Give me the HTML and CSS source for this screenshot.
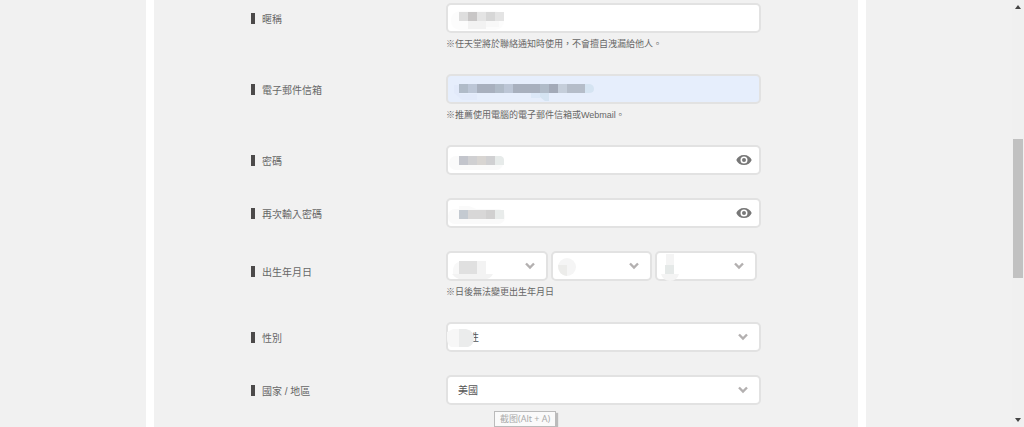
FILE: index.html
```html
<!DOCTYPE html>
<html lang="zh-Hant">
<head>
<meta charset="utf-8">
<meta name="viewport" content="width=device-width, initial-scale=1">
<title>帳號註冊</title>
<link rel="stylesheet" href="styles.css">
</head>
<body>
<svg class="defs" aria-hidden="true">
  <symbol id="chevron" viewBox="0 0 12 8"><path d="M2 1.5 6 5.500 10 1.500" fill="none" stroke="#b3b0b0" stroke-width="2.4"/></symbol>
  <symbol id="eye" viewBox="0 0 16 10"><path fill="#777" fill-rule="evenodd" d="M8 0C4.400 0 1.400 2 .3 5c1.100 3 4.100 5 7.700 5s6.600-2 7.700-5C14.600 2 11.600 0 8 0zm0 8.500a3.500 3.500 0 1 1 0-7 3.500 3.500 0 0 1 0 7zM8 3a2 2 0 1 0 0 4 2 2 0 0 0 0-4z"/></symbol>
</svg>
<main class="page">
  <form class="card">
    <div class="row">
      <label class="label" for="nickname">暱稱</label>
      <div class="field">
        <div class="control">
          <input class="box" id="nickname" type="text">
          <svg class="mask" viewBox="0 0 160 30" aria-hidden="true">
            <rect x="5" y="8" width="53" height="19" rx="9" fill="#fcfcfc"/>
            <path fill="#dedede" d="M13 9h9v9h-9z"/><path fill="#c8c6c6" d="M22 9h9v9h-9z"/><path fill="#e4e4e4" d="M31 9h9v9h-9zM49 9h9v9h-9z"/><path fill="#d7d7d7" d="M40 9h9v9h-9z"/><path fill="#f2f2f2" d="M22 18h18v8H22z"/><path fill="#f8f8f8" d="M40 18h13v6H40z"/>
          </svg>
        </div>
        <p class="note">※任天堂將於聯絡通知時使用，不會擅自洩漏給他人。</p>
      </div>
    </div>
    <div class="row">
      <label class="label" for="email">電子郵件信箱</label>
      <div class="field">
        <div class="control">
          <input class="box filled" id="email" type="email">
          <svg class="mask" viewBox="0 0 160 30" aria-hidden="true">
            <path fill="#e2eafa" d="M8 11h5v9h18v6H16l-8-7z"/>
            <path fill="#b0bbc8" d="M13 10h9v9h-9zM49 10h9v9h-9zM94 10h9v9h-9z"/><path fill="#bcc6d6" d="M22 10h9v9h-9zM58 10h9v9h-9z"/><path fill="#a8b0be" d="M31 10h18v9H31zM67 10h27v9H67z"/><path fill="#a3aab8" d="M103 10h9v9h-9z"/><path fill="#c5ceda" d="M112 10h9v9h-9z"/><path fill="#b5bdc9" d="M121 10h18v9h-18z"/><path fill="#d5e4f2" d="M139 10h5q4 1 4 5t-5 4h-4zM94 19h9v8h-4l-5-4z"/><path fill="#dce8f8" d="M85 19h9v5h-9z"/>
          </svg>
        </div>
        <p class="note">※推薦使用電腦的電子郵件信箱或Webmail。</p>
      </div>
    </div>
    <div class="row">
      <label class="label" for="password">密碼</label>
      <div class="field">
        <div class="control">
          <input class="box" id="password" type="password">
          <button class="reveal" type="button" aria-label="顯示密碼"><svg class="eye"><use href="#eye"/></svg></button>
          <svg class="mask" viewBox="0 0 160 30" aria-hidden="true">
            <rect x="3" y="11" width="54" height="14" rx="7" fill="#fafafa"/>
            <path fill="#c3c5cc" d="M13 11h9v9h-9z"/><path fill="#d0d0d2" d="M22 11h9v9h-9zM40 11h9v9h-9z"/><path fill="#d8d5d2" d="M31 11h9v9h-9z"/><path fill="#e7ebea" d="M49 11h6q3 1 3 4v5h-9z"/>
          </svg>
        </div>
      </div>
    </div>
    <div class="row">
      <label class="label" for="confirm">再次輸入密碼</label>
      <div class="field">
        <div class="control">
          <input class="box" id="confirm" type="password">
          <button class="reveal" type="button" aria-label="顯示密碼"><svg class="eye"><use href="#eye"/></svg></button>
          <svg class="mask" viewBox="0 0 160 30" aria-hidden="true">
            <rect x="2" y="11" width="57" height="15" rx="7" fill="#fafafa"/><path fill="#fafafa" d="M13 8h10l10 4H13z"/>
            <path fill="#c4cad1" d="M13 12h9v9h-9z"/><path fill="#d8d7d7" d="M22 12h18v9H22z"/><path fill="#d1d0d0" d="M40 12h9v9h-9z"/><path fill="#e9eceb" d="M49 12h9v9h-9z"/>
          </svg>
        </div>
      </div>
    </div>
    <div class="row">
      <label class="label label-group" for="year">出生年月日</label>
      <div class="field">
        <div class="date">
          <div class="control">
            <select class="box" id="year" aria-label="年"><option></option></select>
            <svg class="chevron"><use href="#chevron"/></svg>
            <svg class="mask" viewBox="0 0 160 30" aria-hidden="true">
              <path fill="#f8f8f8" d="M7 18q1-6 6-7v12H7z"/><path fill="#f3f3f3" d="M31 10h9v13h-9zM6 23h41q-2 4-6 5H13q-4-1-7-5z"/><path fill="#e0e0e0" d="M13 10h18v13H13z"/>
            </svg>
          </div>
          <div class="control">
            <select class="box" id="month" aria-label="月"><option></option></select>
            <svg class="chevron"><use href="#chevron"/></svg>
            <svg class="mask" viewBox="0 0 160 30" aria-hidden="true">
              <circle cx="16" cy="16" r="9" fill="#f5f5f5"/><path fill="#ececea" d="M7 14h9v11q-9-1-9-11z"/>
            </svg>
          </div>
          <div class="control">
            <select class="box" id="day" aria-label="日"><option></option></select>
            <svg class="chevron"><use href="#chevron"/></svg>
            <svg class="mask" viewBox="0 0 160 30" aria-hidden="true">
              <path fill="#f4f4f4" d="M11 3h8v20h5q-2 7-9 7t-9-7h5V3z"/><path fill="#e5e9e8" d="M10 14h9v9h-9z"/>
            </svg>
          </div>
        </div>
        <p class="note">※日後無法變更出生年月日</p>
      </div>
    </div>
    <div class="row">
      <label class="label" for="gender">性別</label>
      <div class="field">
        <div class="control">
          <select class="box" id="gender"><option>&nbsp;&nbsp;&nbsp;&nbsp;性</option></select>
          <svg class="chevron chevron-wide"><use href="#chevron"/></svg>
          <svg class="mask" viewBox="0 0 160 30" aria-hidden="true">
            <path fill="#f7f7f7" d="M1 10l6-3h6v18H5q-4-3-4-8z"/><path fill="#ebecec" d="M13 7h7q8 2 8 9t-6 9h-9z"/>
          </svg>
        </div>
      </div>
    </div>
    <div class="row">
      <label class="label" for="country">國家 / 地區</label>
      <div class="field">
        <div class="control">
          <select class="box" id="country"><option>美國</option></select>
          <svg class="chevron chevron-wide"><use href="#chevron"/></svg>
        </div>
        <div class="tooltip" role="tooltip">截图(Alt + A)</div>
      </div>
    </div>
  </form>
</main>
<div class="scrollbar" aria-hidden="true">
  <svg class="arrow" viewBox="0 0 6 4"><path d="M3 0 6 4H0z" fill="#444"/></svg>
  <div class="track"><div class="thumb"></div></div>
  <svg class="arrow" viewBox="0 0 6 4"><path d="M0 0H6L3 4z" fill="#444"/></svg>
</div>
</body>
</html>
```
FILE: styles.css
```css
* { box-sizing: border-box; }

body {
  display: flex;
  height: 100vh;
  margin: 0;
  overflow: hidden;
  background: #f1f1f1;
  color: #666;
  font-family: "Liberation Sans", "Noto Sans CJK TC", sans-serif;
  font-size: 10px;
}

.defs { display: none; }

.page {
  display: flex;
  flex: 1;
  justify-content: center;
}

.card {
  display: flex;
  flex-direction: column;
  gap: 23px;
  width: 100%;
  max-width: 720px;
  padding: 3px 97px 0;
  border: solid #fff;
  border-width: 0 8px;
}

.row {
  display: grid;
  grid-template-columns: 195px 1fr;
  align-items: start;
}

.label {
  display: flex;
  align-items: center;
  gap: 7px;
  height: 30px;
}

.label::before {
  content: "";
  width: 4px;
  height: 11px;
  background: #4c4a4a;
}

.label-group { height: 40px; }

.field, .control { position: relative; }

.box {
  display: block;
  width: 100%;
  height: 30px;
  padding: 0 10px;
  border: 2px solid #e2e2e2;
  border-radius: 5px;
  background: #fff;
  color: #555;
  font: inherit;
  appearance: none;
}

.filled { background: #e6eefc; }

.date {
  display: grid;
  grid-template-columns: repeat(3, 1fr);
  gap: 3px;
  padding-right: 4px;
}

.note {
  margin: 0;
  padding-top: 4px;
  font-size: 9px;
  line-height: 14px;
}

.mask {
  position: absolute;
  top: 0;
  left: 0;
  width: 160px;
  height: 30px;
  pointer-events: none;
}

.chevron {
  position: absolute;
  top: 11px;
  right: 12px;
  width: 12px;
  height: 8px;
  pointer-events: none;
}

.reveal {
  position: absolute;
  top: 0;
  right: 9px;
  display: grid;
  place-items: center;
  width: 16px;
  height: 30px;
  padding: 0;
  border: 0;
  background: none;
}

.eye {
  width: 16px;
  height: 10px;
}

.tooltip {
  position: absolute;
  top: 36px;
  left: 48px;
  padding: 0 5px;
  border: 1px solid #bbb;
  background: #fafafa;
  box-shadow: 2px 2px 1px #bbb;
  color: #aaa;
  font-family: "Noto Sans", "Noto Sans CJK SC", sans-serif;
  font-size: 9px;
  line-height: 14px;
  white-space: nowrap;
}

.scrollbar {
  display: flex;
  flex-direction: column;
  align-items: center;
  width: 12px;
  padding: 5px 0;
  background: #f0f0f0;
}

.arrow {
  width: 6px;
  height: 4px;
}

.track {
  flex: 1;
  padding-top: 130px;
}

.thumb {
  width: 10px;
  height: 139px;
  background: #c1c1c1;
}
```
